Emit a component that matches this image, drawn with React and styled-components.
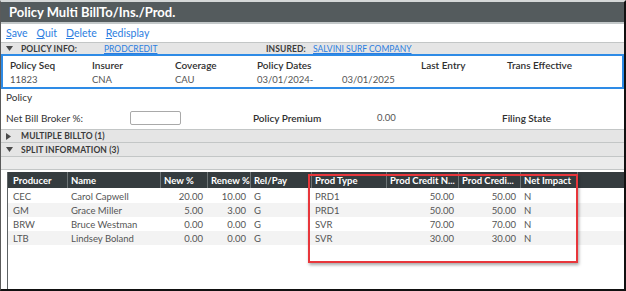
import React from 'react';
import styled, { createGlobalStyle } from 'styled-components';

const GlobalStyle = createGlobalStyle`
  html, body { margin: 0; padding: 0; background: #fff; }
  body { font-family: Lato, "Open Sans", sans-serif; }
  * { box-sizing: border-box; }
`;

const Frame = styled.div`
  position: relative;
  width: 626px;
  height: 291px;
  border-top: 2px solid #d5d8d8;
  border-left: 1px solid #5a5a5a;
  border-right: 2px solid #111;
  border-bottom: 2px solid #111;
  display: flex;
  flex-direction: column;
  overflow: hidden;
  background: #fff;
`;

const TitleBar = styled.div`
  flex: none;
  height: 22px;
  background: #545b5d;
  border-bottom: 2px solid #c3c8c9;
  color: #fff;
  font-weight: 700;
  font-size: 13px;
  display: flex;
  align-items: center;
  padding-left: 8px;
`;

const Toolbar = styled.div`
  flex: none;
  height: 18px;
  display: flex;
  align-items: center;
  gap: 9px;
  padding-left: 5px;
`;

const ToolLink = styled.a`
  color: #2b7de0;
  font-size: 10.5px;
  text-decoration: none;
  cursor: pointer;
  u { text-decoration: underline; }
`;

const SectionBar = styled.div`
  flex: none;
  height: ${(p) => p.$h}px;
  background: ${(p) => (p.$plain ? '#ebebeb' : '#e5e5e5')};
  border-top: 1px solid #c3c6c6;
  border-bottom: ${(p) => (p.$bottom ? '1px solid #c3c6c6' : 'none')};
  display: flex;
  align-items: center;
  padding-left: 5px;
  font-size: 8.5px;
  color: #3a3a3a;
`;

const Caret = styled.span`
  width: 15px;
  display: flex;
  align-items: center;
`;

const BarLabel = styled.span`
  font-weight: 700;
  width: ${(p) => (p.$w ? `${p.$w}px` : 'auto')};
  letter-spacing: 0.1px;
`;

const BarLink = styled.a`
  color: #2b7de0;
  text-decoration: underline;
  width: ${(p) => (p.$w ? `${p.$w}px` : 'auto')};
`;

const InfoBox = styled.div`
  flex: none;
  height: 35px;
  border: 2px solid #2e8be6;
  padding: 2px 0 0 7px;
  display: grid;
  grid-template-columns: 82px 83px 82px 164px 86px 1fr;
  grid-template-rows: 14px 14px;
  align-items: center;
`;

const InfoLabel = styled.div`
  font-size: 10px;
  font-weight: 600;
  color: #2f2f2f;
`;

const InfoValue = styled.div`
  font-size: 9.5px;
  color: #555;
  display: flex;
`;

const DatePart = styled.span`
  width: ${(p) => p.$w}px;
`;

const PolicyBlock = styled.div`
  flex: none;
  height: 40px;
  padding: 1px 0 4px 5px;
  display: flex;
  flex-direction: column;
  gap: 6px;
`;

const PlainLabel = styled.div`
  height: 14px;
  display: flex;
  align-items: center;
  font-size: 10px;
  color: #333;
`;

const FieldRow = styled.div`
  height: 15px;
  display: grid;
  grid-template-columns: 124px 123px 124px 125px 1fr;
  align-items: center;
  font-size: 10px;
  color: #333;
`;

const StrongLabel = styled.span`
  font-weight: 600;
  color: #2f2f2f;
`;

const NumText = styled.span`
  color: #555;
  font-size: 9.5px;
`;

const Input = styled.input`
  width: 51px;
  height: 14px;
  border: 1px solid #a9a9a9;
  border-radius: 2px;
  padding: 0;
  background: #fff;
`;

const TableWrap = styled.div`
  flex: 1;
  margin: 2px 0 0 6px;
  border-left: 1px solid #5d6264;
  display: flex;
  flex-direction: column;
`;

const cols = '59px 93px 47px 43px 61px 75px 72px 62px 57px 1fr';

const HeadRow = styled.div`
  display: grid;
  grid-template-columns: ${cols};
  height: 16px;
  background: #353c3f;
  margin-bottom: 1px;
`;

const HeadCell = styled.div`
  display: flex;
  align-items: center;
  color: #fff;
  font-weight: 700;
  font-size: 9.5px;
  padding-left: ${(p) => (p.$first ? 5 : 3)}px;
  border-left: ${(p) => (p.$first ? 'none' : '1px solid #6d7476')};
  white-space: nowrap;
  overflow: hidden;
`;

const Row = styled.div`
  display: grid;
  grid-template-columns: ${cols};
  height: 14px;
  background: ${(p) => (p.$alt ? '#f3f3f3' : '#fff')};
`;

const Cell = styled.div`
  display: flex;
  align-items: center;
  justify-content: ${(p) => (p.$num ? 'flex-end' : 'flex-start')};
  padding: ${(p) => (p.$num ? '0 4px 0 0' : p.$first ? '0 0 0 5px' : '0 0 0 4px')};
  font-size: 9.5px;
  color: #555;
  white-space: nowrap;
`;

const Highlight = styled.div`
  position: absolute;
  left: 307px;
  top: 172px;
  width: 270px;
  height: 89px;
  border: 2px solid #e8363b;
  box-shadow: 1px 2px 3px rgba(0, 0, 0, 0.35);
  pointer-events: none;
`;

const Down = () => (
  <svg width="7" height="5" viewBox="0 0 7 5"><path d="M0 0 H7 L3.5 5 Z" fill="#4a4a4a" /></svg>
);
const Right = () => (
  <svg width="5" height="7" viewBox="0 0 5 7"><path d="M0 0 L5 3.5 L0 7 Z" fill="#4a4a4a" /></svg>
);

const headers = ['Producer', 'Name', 'New %', 'Renew %', 'Rel/Pay', 'Prod Type', 'Prod Credit N...', 'Prod Credi...', 'Net Impact', ''];

const rows = [
  ['CEC', 'Carol Capwell', '20.00', '10.00', 'G', 'PRD1', '50.00', '50.00', 'N'],
  ['GM', 'Grace Miller', '5.00', '3.00', 'G', 'PRD1', '50.00', '50.00', 'N'],
  ['BRW', 'Bruce Westman', '0.00', '0.00', 'G', 'SVR', '70.00', '70.00', 'N'],
  ['LTB', 'Lindsey Boland', '0.00', '0.00', 'G', 'SVR', '30.00', '30.00', 'N'],
];
const numCols = [2, 3, 6, 7];

export default function App() {
  return (
    <>
      <GlobalStyle />
      <Frame>
        <TitleBar>Policy Multi BillTo/Ins./Prod.</TitleBar>
        <Toolbar>
          <ToolLink><u>S</u>ave</ToolLink>
          <ToolLink><u>Q</u>uit</ToolLink>
          <ToolLink><u>D</u>elete</ToolLink>
          <ToolLink><u>R</u>edisplay</ToolLink>
        </Toolbar>
        <SectionBar $h={12}>
          <Caret><Down /></Caret>
          <BarLabel $w={83}>POLICY INFO:</BarLabel>
          <BarLink $w={162}>PRODCREDIT</BarLink>
          <BarLabel $w={47}>INSURED:</BarLabel>
          <BarLink>SALVINI SURF COMPANY</BarLink>
        </SectionBar>
        <InfoBox>
          <InfoLabel>Policy Seq</InfoLabel>
          <InfoLabel>Insurer</InfoLabel>
          <InfoLabel>Coverage</InfoLabel>
          <InfoLabel>Policy Dates</InfoLabel>
          <InfoLabel>Last Entry</InfoLabel>
          <InfoLabel>Trans Effective</InfoLabel>
          <InfoValue>11823</InfoValue>
          <InfoValue>CNA</InfoValue>
          <InfoValue>CAU</InfoValue>
          <InfoValue>
            <DatePart $w={85}>03/01/2024-</DatePart>
            <DatePart $w={79}>03/01/2025</DatePart>
          </InfoValue>
          <InfoValue />
          <InfoValue />
        </InfoBox>
        <PolicyBlock>
          <PlainLabel>Policy</PlainLabel>
          <FieldRow>
            <span>Net Bill Broker %:</span>
            <span><Input /></span>
            <StrongLabel>Policy Premium</StrongLabel>
            <NumText>0.00</NumText>
            <StrongLabel>Filing State</StrongLabel>
          </FieldRow>
        </PolicyBlock>
        <SectionBar $h={13}>
          <Caret><Right /></Caret>
          <BarLabel>MULTIPLE BILLTO (1)</BarLabel>
        </SectionBar>
        <SectionBar $h={14}>
          <Caret><Down /></Caret>
          <BarLabel>SPLIT INFORMATION (3)</BarLabel>
        </SectionBar>
        <SectionBar $h={14} $plain $bottom />
        <TableWrap>
          <HeadRow>
            {headers.map((h, i) => (
              <HeadCell key={i} $first={i === 0}>{h}</HeadCell>
            ))}
          </HeadRow>
          {rows.map((r, ri) => (
            <Row key={ri} $alt={ri % 2 === 1}>
              {r.map((c, ci) => (
                <Cell key={ci} $first={ci === 0} $num={numCols.includes(ci)}>{c}</Cell>
              ))}
              <Cell />
            </Row>
          ))}
        </TableWrap>
        <Highlight />
      </Frame>
    </>
  );
}
